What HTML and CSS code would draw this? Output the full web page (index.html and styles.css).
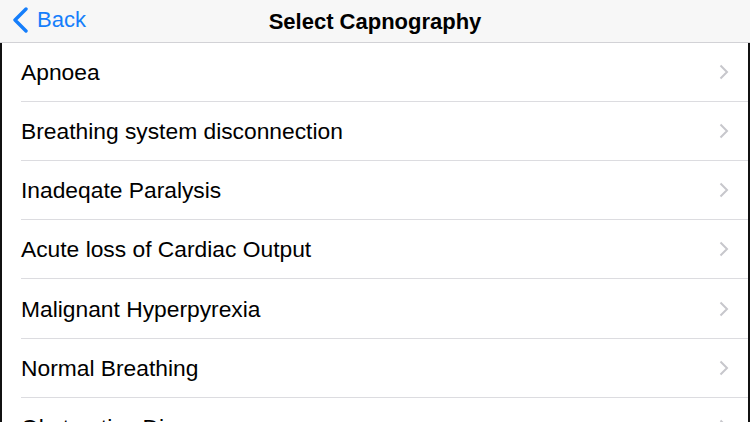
FILE: index.html
```html
<!DOCTYPE html>
<html>
<head>
<meta charset="utf-8">
<link rel="stylesheet" href="styles.css">
</head>
<body>
<div class="screen">
  <header class="nav">
    <div class="back">
      <svg class="back-icon" width="18" height="26" viewBox="0 0 18 26"><path d="M15 2 L4 13 L15 24" fill="none" stroke="#157efb" stroke-width="3.4" stroke-linecap="round" stroke-linejoin="round"/></svg>
      <span class="back-label">Back</span>
    </div>
    <div class="title">Select Capnography</div>
  </header>
  <ul class="list">
    <li class="row"><span class="label">Apnoea</span><svg class="chev" width="10" height="16" viewBox="0 0 10 16"><path d="M1.5 1.5 L8 8 L1.5 14.5" fill="none" stroke="#c7c7cc" stroke-width="2"/></svg></li>
    <li class="row"><span class="label">Breathing system disconnection</span><svg class="chev" width="10" height="16" viewBox="0 0 10 16"><path d="M1.5 1.5 L8 8 L1.5 14.5" fill="none" stroke="#c7c7cc" stroke-width="2"/></svg></li>
    <li class="row"><span class="label">Inadeqate Paralysis</span><svg class="chev" width="10" height="16" viewBox="0 0 10 16"><path d="M1.5 1.5 L8 8 L1.5 14.5" fill="none" stroke="#c7c7cc" stroke-width="2"/></svg></li>
    <li class="row"><span class="label">Acute loss of Cardiac Output</span><svg class="chev" width="10" height="16" viewBox="0 0 10 16"><path d="M1.5 1.5 L8 8 L1.5 14.5" fill="none" stroke="#c7c7cc" stroke-width="2"/></svg></li>
    <li class="row"><span class="label">Malignant Hyperpyrexia</span><svg class="chev" width="10" height="16" viewBox="0 0 10 16"><path d="M1.5 1.5 L8 8 L1.5 14.5" fill="none" stroke="#c7c7cc" stroke-width="2"/></svg></li>
    <li class="row"><span class="label">Normal Breathing</span><svg class="chev" width="10" height="16" viewBox="0 0 10 16"><path d="M1.5 1.5 L8 8 L1.5 14.5" fill="none" stroke="#c7c7cc" stroke-width="2"/></svg></li>
    <li class="row"><span class="label">Obstructive Disease</span><svg class="chev" width="10" height="16" viewBox="0 0 10 16"><path d="M1.5 1.5 L8 8 L1.5 14.5" fill="none" stroke="#c7c7cc" stroke-width="2"/></svg></li>
  </ul>
</div>
</body>
</html>
```
FILE: styles.css
```css
html, body {
  margin: 0;
  padding: 0;
  background: #ffffff;
  overflow: hidden;
}
.screen {
  width: 750px;
  height: 422px;
  overflow: hidden;
  font-family: "Liberation Sans", Arial, sans-serif;
  color: #000;
  background: #fff;
}
.nav {
  height: 42px;
  background: #f7f7f7;
  border-bottom: 1px solid #d2d2d6;
  display: flex;
  align-items: center;
  justify-content: center;
  position: relative;
}
.back {
  position: absolute;
  left: 11px;
  top: 7px;
  display: flex;
  align-items: center;
  gap: 8px;
}
.back-label {
  color: #157efb;
  font-size: 22px;
  line-height: 26px;
}
.title {
  font-size: 22px;
  font-weight: bold;
  padding-top: 1px;
}
.list {
  list-style: none;
  margin: 0;
  padding: 0;
  border-left: 2px solid #111;
  border-right: 2px solid #111;
  height: 379px;
}
.row {
  height: 58px;
  margin-left: 19px;
  padding-right: 19px;
  border-bottom: 1px solid #dcdce0;
  display: flex;
  align-items: center;
  justify-content: space-between;
}
.row:nth-child(5) {
  height: 59px;
}
.label {
  font-size: 22.8px;
  padding-top: 1px;
}
.chev {
  display: block;
}
```
